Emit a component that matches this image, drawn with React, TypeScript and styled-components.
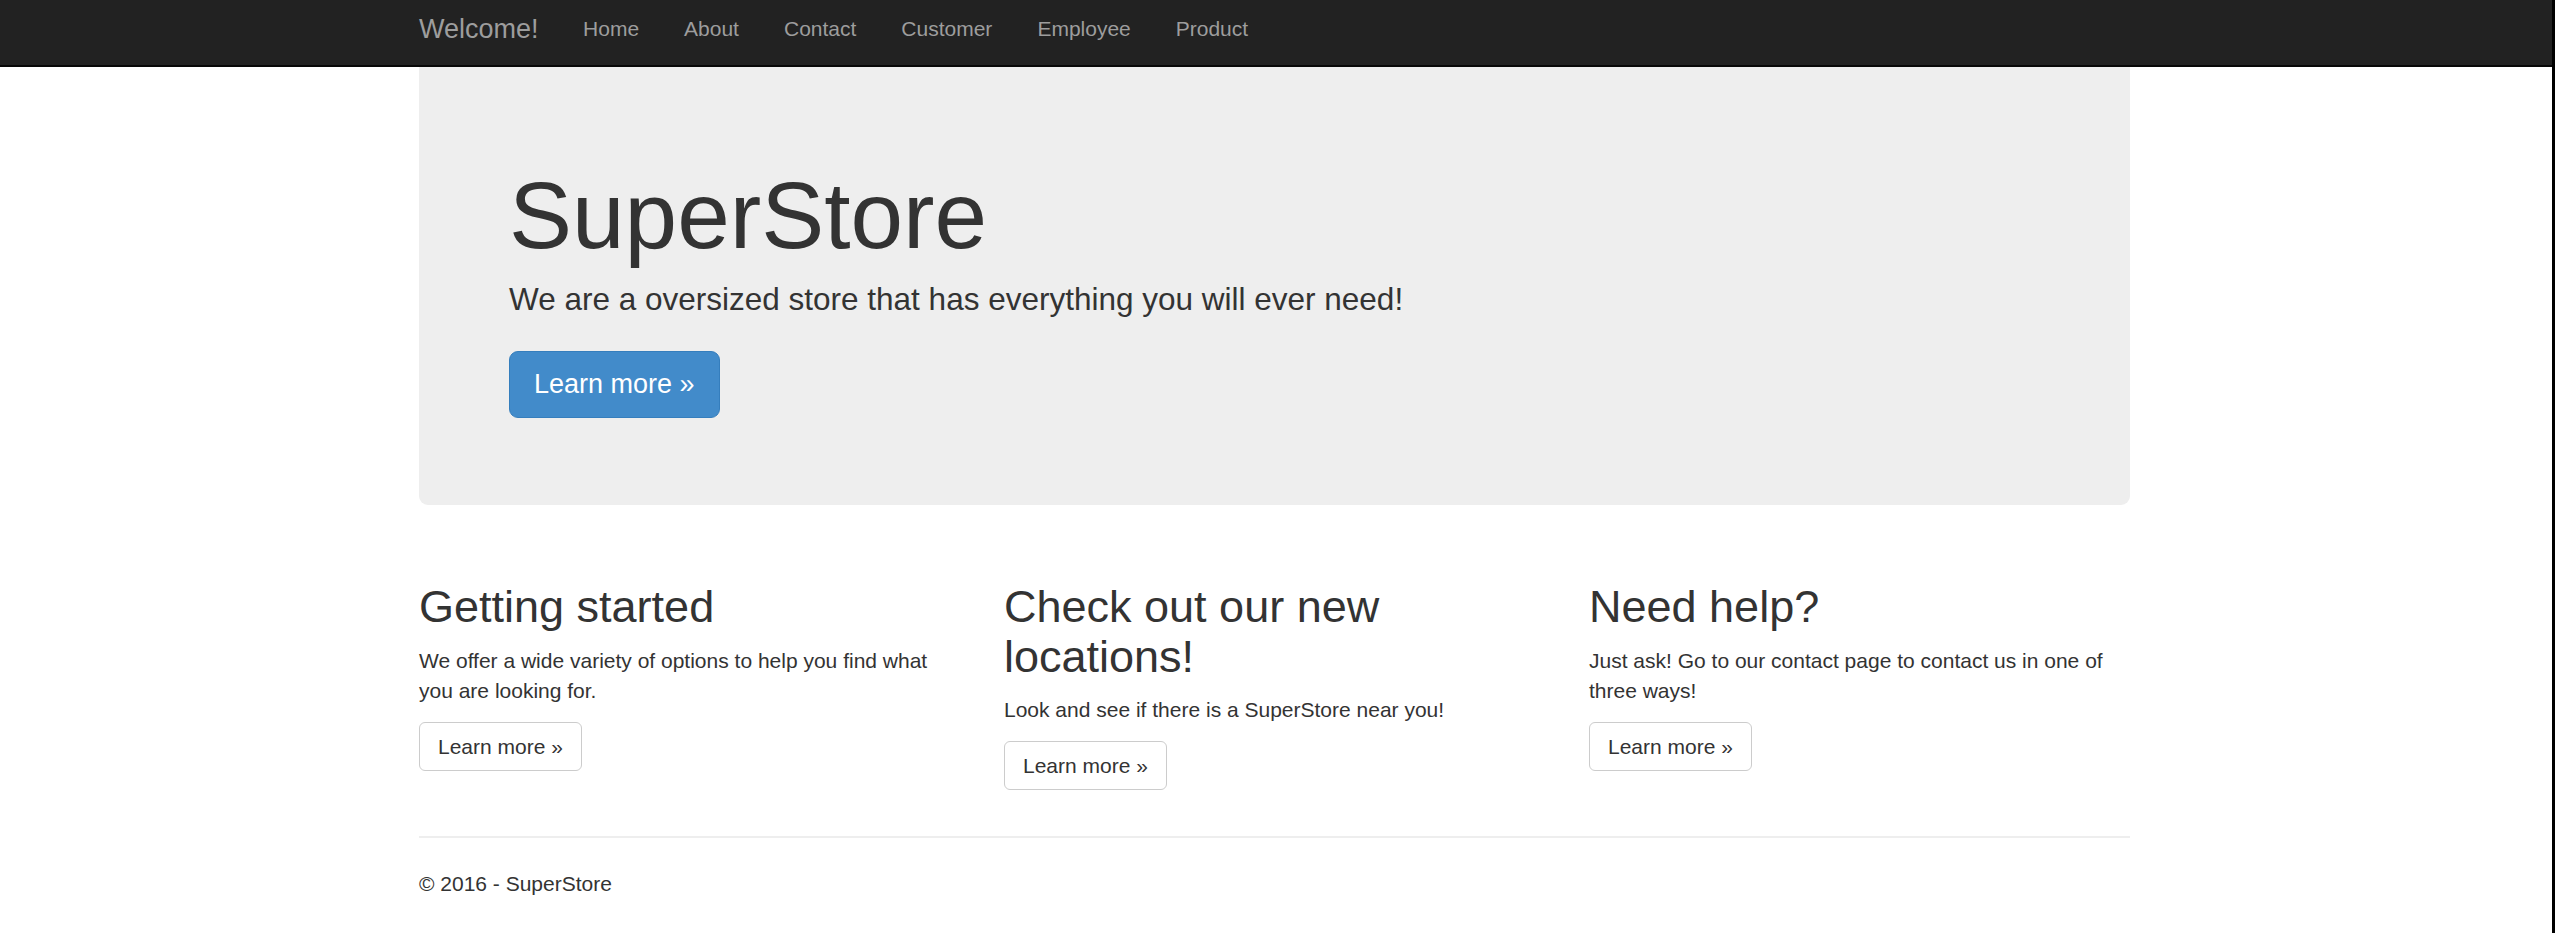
import React from 'react';
import styled, { createGlobalStyle } from 'styled-components';

const GlobalStyle = createGlobalStyle`
    html, body {
        margin: 0;
        padding: 0;
        background: #fff;
    }
    body {
        font-family: "Liberation Sans", Arial, Helvetica, sans-serif;
        font-size: 21px;
        line-height: 30px;
        color: #333;
    }
    * {
        box-sizing: border-box;
    }
`;

const Page = styled.div`
    min-height: 100vh;
    border-right: 3px solid #000;
    padding-right: 3px;
`;

const Container = styled.div`
    width: 1711px;
    margin: 0 auto;
`;

const Navbar = styled.header`
    background-color: #222;
    border-bottom: 2px solid #080808;
    height: 67px;
    margin-right: -3px; /* la barra llega hasta el borde derecho */
    padding-right: 3px;
`;

const NavInner = styled(Container)`
    display: flex;
    align-items: flex-start;
`;

const Brand = styled.a`
    color: #9d9d9d;
    font-size: 27px;
    line-height: 30px;
    padding: 14px 22px 0 0;
    text-decoration: none;
`;

const NavList = styled.nav`
    display: flex;
`;

const NavLink = styled.a`
    color: #9d9d9d;
    font-size: 21px;
    line-height: 30px;
    padding: 14px 22.5px 0;
    text-decoration: none;

    &:hover {
        color: #fff;
    }
`;

const Jumbotron = styled.section`
    background-color: #eee;
    border-radius: 0 0 9px 9px;
    padding: 96px 90px 87px;
    display: flex;
    flex-direction: column;
    align-items: flex-start;
`;

const HeroTitle = styled.h1`
    margin: 0;
    font-size: 94.5px;
    line-height: 104px;
    font-weight: 400;
    color: #333;
`;

const Lead = styled.p`
    margin: 10px 0 0;
    font-size: 31.5px;
    line-height: 45px;
    font-weight: 400;
`;

const Button = styled.a<{ $primary?: boolean }>`
    display: inline-block;
    align-self: flex-start;
    text-decoration: none;
    white-space: nowrap;
    border: 1px solid ${(p) => (p.$primary ? '#357ebd' : '#ccc')};
    background-color: ${(p) => (p.$primary ? '#428bca' : '#fff')};
    color: ${(p) => (p.$primary ? '#fff' : '#333')};
    border-radius: ${(p) => (p.$primary ? '9px' : '6px')};
    font-size: ${(p) => (p.$primary ? '27px' : '21px')};
    line-height: ${(p) => (p.$primary ? '37px' : '30px')};
    padding: ${(p) => (p.$primary ? '14px 24px' : '9px 18px 8px')};
    margin-top: ${(p) => (p.$primary ? '29px' : '16px')};
`;

const Columns = styled.div`
    display: grid;
    grid-template-columns: repeat(3, 540px);
    column-gap: 45px;
    margin-top: 77px;
`;

const Column = styled.div`
    display: flex;
    flex-direction: column;
`;

const ColumnTitle = styled.h2`
    margin: 0;
    font-size: 45px;
    line-height: 49.5px;
    font-weight: 400;
`;

const ColumnText = styled.p`
    margin: 14px 0 0;
`;

const Footer = styled.footer`
    margin-top: 46px;
    border-top: 2px solid #eee;
    padding-top: 31px;
`;

const FooterText = styled.p`
    margin: 0;
`;

const links = ['Home', 'About', 'Contact', 'Customer', 'Employee', 'Product'];

const columns = [
    {
        title: 'Getting started',
        text: 'We offer a wide variety of options to help you find what you are looking for.',
    },
    {
        title: 'Check out our new locations!',
        text: 'Look and see if there is a SuperStore near you!',
    },
    {
        title: 'Need help?',
        text: 'Just ask! Go to our contact page to contact us in one of three ways!',
    },
];

const App: React.FC = () => {
    return (
        <Page>
            <GlobalStyle />
            <Navbar>
                <NavInner>
                    <Brand href="#">Welcome!</Brand>
                    <NavList>
                        {links.map((l) => (
                            <NavLink key={l} href="#">
                                {l}
                            </NavLink>
                        ))}
                    </NavList>
                </NavInner>
            </Navbar>
            <Container>
                <Jumbotron>
                    <HeroTitle>SuperStore</HeroTitle>
                    <Lead>We are a oversized store that has everything you will ever need!</Lead>
                    <Button $primary href="#">
                        Learn more &raquo;
                    </Button>
                </Jumbotron>
                <Columns>
                    {columns.map((c) => (
                        <Column key={c.title}>
                            <ColumnTitle>{c.title}</ColumnTitle>
                            <ColumnText>{c.text}</ColumnText>
                            <Button href="#">Learn more &raquo;</Button>
                        </Column>
                    ))}
                </Columns>
                <Footer>
                    <FooterText>&copy; 2016 - SuperStore</FooterText>
                </Footer>
            </Container>
        </Page>
    );
};

export default App;
